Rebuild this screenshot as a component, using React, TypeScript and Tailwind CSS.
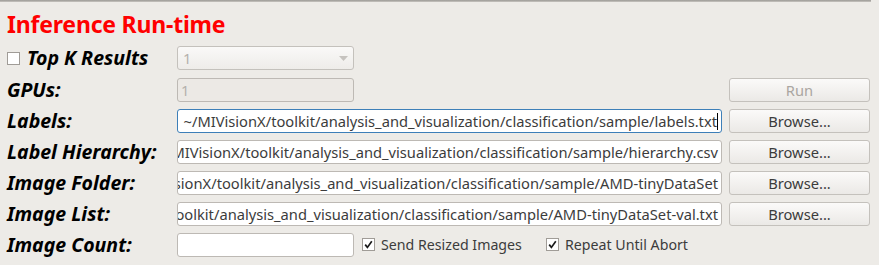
import React from "react";

const FONT = { fontFamily: '"Noto Sans", "Open Sans", sans-serif' };

function Label({ children }: { children: React.ReactNode }) {
  return (
    <div className="flex items-center h-[24px] text-[19.5px] font-bold italic text-black whitespace-nowrap">
      {children}
    </div>
  );
}

function Field({
  text,
  focused,
  disabled,
  width,
}: {
  text?: string;
  focused?: boolean;
  disabled?: boolean;
  width?: string;
}) {
  return (
    <div
      className={`h-[24px] rounded-[3px] border flex items-center overflow-hidden px-[3px] whitespace-nowrap ${
        focused ? "border-[#3d7fb8]" : "border-[#bdb9b4]"
      } ${disabled ? "bg-[#ece9e5] text-[#b5b1ac] justify-start" : "bg-white text-[#3c3c3c] justify-end"} ${width ?? ""}`}
    >
      <span className="text-[14.7px] shrink-0">{text}</span>
      {focused && <span className="inline-block w-[1px] h-[17px] bg-black shrink-0" />}
    </div>
  );
}

function Button({ children, disabled }: { children: React.ReactNode; disabled?: boolean }) {
  return (
    <div
      className={`h-[24px] rounded-[3px] border border-[#c4c1bc] bg-gradient-to-b from-[#fbfaf9] to-[#ebe9e6] flex items-center justify-center text-[14.7px] ${
        disabled ? "text-[#aaa6a1]" : "text-[#3c3c3c]"
      }`}
    >
      {children}
    </div>
  );
}

function Check({ checked }: { checked?: boolean }) {
  return (
    <div className="w-[13px] h-[13px] border border-[#a09c97] bg-white flex items-center justify-center shrink-0">
      {checked && (
        <svg width="9" height="9" viewBox="0 0 9 9">
          <path d="M1.2 4.6 L3.4 7.4 L7.8 1.2" stroke="#1a1a1a" strokeWidth="1.7" fill="none" />
        </svg>
      )}
    </div>
  );
}

const tail = "toolkit/analysis_and_visualization/classification/sample/";

export default function App() {
  return (
    <div className="w-[879px] h-[265px] bg-[#edebe7] overflow-hidden" style={FONT}>
      <div className="w-[871px] h-[2px] bg-gradient-to-b from-[#9a9894] to-[#c9c6c1]" />
      <div className="pl-[7px] pt-[7px] h-[44px]">
        <div className="text-[23px] font-bold text-[#ff0000] leading-[30px] tracking-[-0.2px]">
          Inference Run-time
        </div>
      </div>
      <div className="grid grid-cols-[163px_545px_141px] gap-x-[7px] gap-y-[7px] pl-[7px]">
        <div className="flex items-center gap-[7px]">
          <Check />
          <Label>Top K Results</Label>
        </div>
        <div>
          <div className="w-[177px] h-[24px] rounded-[3px] border border-[#c4c1bc] bg-gradient-to-b from-[#faf9f8] to-[#eeece9] flex items-center justify-between px-[5px]">
            <span className="text-[14.7px] text-[#b5b1ac]">1</span>
            <svg width="9" height="5" viewBox="0 0 9 5">
              <path d="M0 0 L9 0 L4.5 5 Z" fill="#c6c3bf" />
            </svg>
          </div>
        </div>
        <div />

        <div className="mt-[1px]"><Label>GPUs:</Label></div>
        <div className="mt-[1px]"><Field text="1" disabled width="w-[177px]" /></div>
        <div className="mt-[1px]"><Button disabled>Run</Button></div>

        <Label>Labels:</Label>
        <Field text={"~/MIVisionX/" + tail + "labels.txt"} focused />
        <Button>Browse...</Button>

        <Label>Label Hierarchy:</Label>
        <Field text={"MIVisionX/" + tail + "hierarchy.csv"} />
        <Button>Browse...</Button>

        <Label>Image Folder:</Label>
        <Field text={"sionX/" + tail + "AMD-tinyDataSet"} />
        <Button>Browse...</Button>

        <Label>Image List:</Label>
        <Field text={tail + "AMD-tinyDataSet-val.txt"} />
        <Button>Browse...</Button>

        <Label>Image Count:</Label>
        <div className="flex items-center">
          <Field width="w-[177px]" />
          <div className="flex items-center ml-[8px] w-[184px] gap-[6px]">
            <Check checked />
            <span className="text-[14.2px] text-[#3c3c3c] whitespace-nowrap">Send Resized Images</span>
          </div>
          <div className="flex items-center gap-[6px]">
            <Check checked />
            <span className="text-[14.2px] text-[#3c3c3c] whitespace-nowrap">Repeat Until Abort</span>
          </div>
        </div>
        <div />
      </div>
    </div>
  );
}
